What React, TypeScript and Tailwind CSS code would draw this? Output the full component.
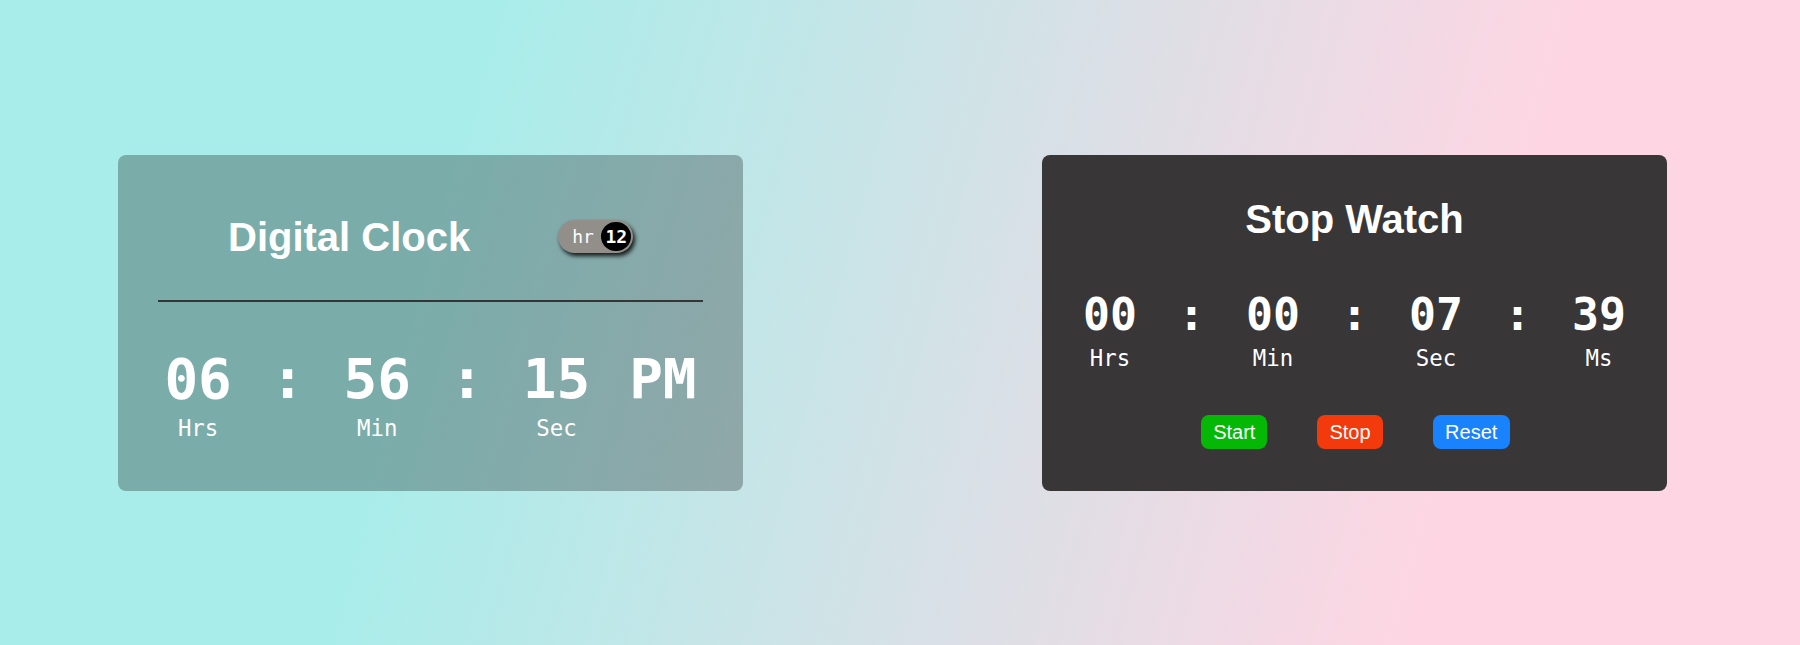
const sans = "font-['Liberation_Sans',Arial,sans-serif]";
const mono = "font-['DejaVu_Sans_Mono','Liberation_Mono',monospace]";

function Unit({ value, label, size }: { value: string; label?: string; size: "lg" | "md" }) {
  return (
    <div className="flex flex-col items-center">
      <span
        className={
          size === "lg"
            ? `${mono} text-[56px] leading-[56px] font-bold text-white`
            : `${mono} text-[44.8px] leading-[45px] font-bold text-white`
        }
      >
        {value}
      </span>
      {label && (
        <span className={`${mono} mt-[7px] text-[22.4px] leading-[28px] text-white`}>{label}</span>
      )}
    </div>
  );
}

function DigitalClock() {
  return (
    <div className="w-[625px] h-[336px] shrink-0 rounded-lg bg-[rgba(0,0,0,0.27)] flex flex-col pt-[58px] px-[40px]">
      <div className="h-[48px] flex items-center pl-[70px] gap-[88px]">
        <h1 className={`${sans} text-[40px] leading-[48px] font-bold text-white`}>Digital Clock</h1>
        <div className="w-[75px] h-[33px] rounded-full bg-[#928f8b] shadow-[2px_3px_4px_rgba(0,0,0,0.85)] flex items-center justify-between pl-[14px] pr-[2px]">
          <span className={`${mono} text-[18px] leading-none text-white`}>hr</span>
          <span
            className={`${mono} w-[30px] h-[29px] rounded-full bg-black text-white text-[18px] font-bold flex items-center justify-center leading-none`}
          >
            12
          </span>
        </div>
      </div>
      <div className="mt-[39px] h-[2px] w-full bg-[#353535]" />
      <div className="mt-[49px] flex justify-center items-start gap-[39px]">
        <Unit value="06" label="Hrs" size="lg" />
        <Unit value=":" size="lg" />
        <Unit value="56" label="Min" size="lg" />
        <Unit value=":" size="lg" />
        <Unit value="15" label="Sec" size="lg" />
        <Unit value="PM" size="lg" />
      </div>
    </div>
  );
}

function StopWatch() {
  return (
    <div className="w-[625px] h-[336px] shrink-0 rounded-lg bg-[#383637] flex flex-col items-center pt-[40px]">
      <h1 className={`${sans} text-[40px] leading-[48px] font-bold text-white`}>Stop Watch</h1>
      <div className="mt-[49px] flex justify-center items-start gap-[41px]">
        <Unit value="00" label="Hrs" size="md" />
        <Unit value=":" size="md" />
        <Unit value="00" label="Min" size="md" />
        <Unit value=":" size="md" />
        <Unit value="07" label="Sec" size="md" />
        <Unit value=":" size="md" />
        <Unit value="39" label="Ms" size="md" />
      </div>
      <div className="mt-[43px] flex gap-[50px] ml-[2px]">
        <button className={`${sans} h-[34px] px-[12px] rounded-lg bg-[#06b806] text-white text-[20px] flex items-center`}>
          Start
        </button>
        <button className={`${sans} h-[34px] px-[12px] rounded-lg bg-[#f23a0c] text-white text-[20px] flex items-center`}>
          Stop
        </button>
        <button className={`${sans} h-[34px] px-[12.5px] rounded-lg bg-[#1983ff] text-white text-[20px] flex items-center`}>
          Reset
        </button>
      </div>
    </div>
  );
}

export default function App() {
  return (
    <div className="w-full h-[645px] bg-[linear-gradient(105deg,#a8edea_25%,#fed6e3_80%)] flex items-center pl-[118px] gap-[299px]">
      <DigitalClock />
      <StopWatch />
    </div>
  );
}
